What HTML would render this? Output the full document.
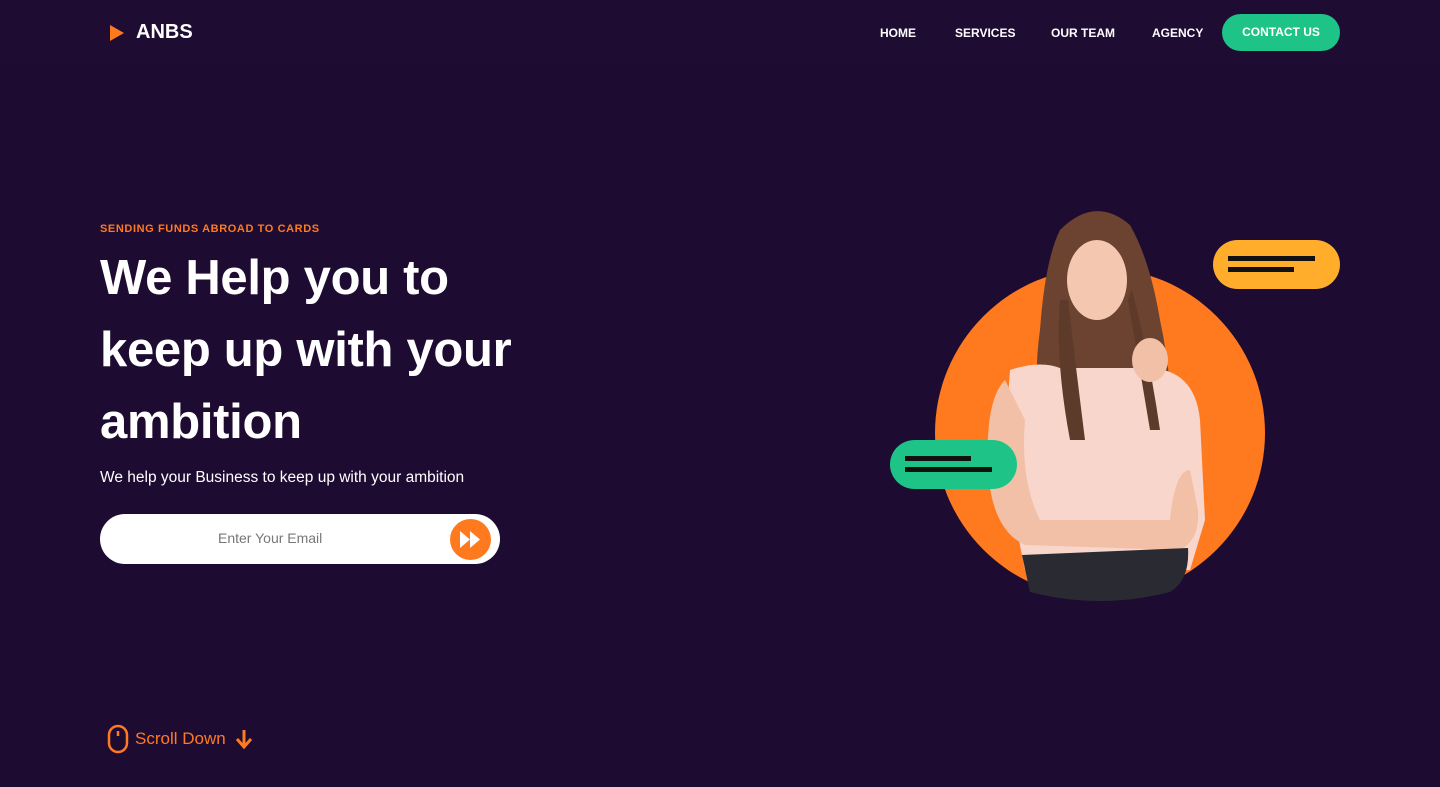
<!DOCTYPE html>
<html><head><meta charset="utf-8"><style>
*{margin:0;padding:0;box-sizing:border-box}
body{width:1440px;height:787px;background:#1e0b32;font-family:"Liberation Sans",sans-serif;position:relative;overflow:hidden;color:#fff}
.hdr{position:absolute;left:0;top:0;width:1440px;height:65px;background:#1f0c33}
.logo{position:absolute;left:110px;top:21px;font-weight:bold;font-size:20px;display:flex;align-items:center}
.logo i{width:0;height:0;border-left:14px solid #ff7a1f;border-top:8px solid transparent;border-bottom:8px solid transparent;margin-right:12px}
.nav a{position:absolute;top:26px;font-size:12px;font-weight:bold;color:#fff;text-decoration:none}
.cta{position:absolute;left:1222px;top:14px;width:118px;height:37px;border-radius:19px;background:#1ec387;font-size:12px;font-weight:bold;text-align:center;line-height:37px}
.sub{position:absolute;left:100px;top:223px;font-size:11px;font-weight:bold;color:#ff7a1f;letter-spacing:.6px}
h1{position:absolute;left:100px;top:242px;font-size:49px;line-height:72px;font-weight:bold;letter-spacing:-.3px;width:450px}
.p{position:absolute;left:100px;top:469px;font-size:15.5px}
.em{position:absolute;left:100px;top:514px;width:400px;height:50px;border-radius:25px;background:#fff}
.em span{position:absolute;left:118px;top:16px;font-size:14px;color:#777}
.em b{position:absolute;left:350px;top:5px;width:41px;height:41px;border-radius:50%;background:#ff7a1f}
.sd{position:absolute;left:107px;top:724px;color:#ff7a1f;font-size:17px;display:flex;align-items:center}
</style></head><body>
<div class="hdr"></div>
<div class="logo"><i></i>ANBS</div>
<div class="nav"><a style="left:880px">HOME</a><a style="left:955px">SERVICES</a><a style="left:1051px">OUR TEAM</a><a style="left:1152px">AGENCY</a></div>
<div class="cta">CONTACT US</div>
<div class="sub">SENDING FUNDS ABROAD TO CARDS</div>
<h1>We Help you to keep up with your ambition</h1>
<div class="p">We help your Business to keep up with your ambition</div>
<div class="em"><span>Enter Your Email</span><b><svg width="41" height="41" viewBox="0 0 41 41"><path d="M10 12 L20 20.5 L10 29Z M20 12 L30 20.5 L20 29Z" fill="#fff"/></svg></b></div>
<div class="sd"><svg width="22" height="30" viewBox="0 0 22 30" style="margin-right:6px"><rect x="2" y="2" width="18" height="26" rx="9" fill="none" stroke="#ff7a1f" stroke-width="2.5"/><line x1="11" y1="7" x2="11" y2="12" stroke="#ff7a1f" stroke-width="2.5"/></svg>Scroll Down<svg width="20" height="22" viewBox="0 0 20 22" style="margin-left:8px"><path d="M10 2 V18 M3 11 L10 19 L17 11" fill="none" stroke="#ff7a1f" stroke-width="3"/></svg></div>

<svg style="position:absolute;left:880px;top:190px" width="470" height="420" viewBox="880 190 470 420">
<circle cx="1100" cy="433" r="165" fill="#ff7a1f"/>
<path d="M1060 230 Q1095 195 1130 225 Q1150 260 1160 320 Q1175 390 1170 450 L1115 470 L1050 470 Q1030 400 1040 330 Q1045 260 1060 230Z" fill="#6b4330"/>
<path d="M1010 370 Q1040 360 1060 368 L1150 368 Q1195 370 1200 420 L1205 520 L1190 570 L1025 570 Q1010 500 1005 440 Z" fill="#f8d6cc"/>
<path d="M1005 380 Q985 400 988 470 Q992 530 1025 545 L1180 550 Q1200 540 1198 510 L1190 470 Q1175 470 1170 520 L1040 520 Q1020 480 1025 420Z" fill="#f2c0a6"/>
<ellipse cx="1097" cy="280" rx="30" ry="40" fill="#f4c8b0"/>
<path d="M1065 250 Q1095 205 1128 245 L1125 230 Q1095 200 1068 230Z" fill="#6b4330"/>
<path d="M1060 300 Q1055 360 1070 440 L1085 440 Q1075 360 1068 300Z M1128 300 Q1140 370 1150 430 L1160 430 Q1150 360 1132 290Z" fill="#5d3a2a"/>
<ellipse cx="1150" cy="360" rx="18" ry="22" fill="#f2c0a6"/>
<path d="M1022 555 L1188 548 Q1190 580 1170 592 Q1100 610 1030 592Z" fill="#2a2a33"/>
<rect x="1213" y="240" width="127" height="49" rx="24.5" fill="#ffad2a"/>
<rect x="1228" y="256" width="87" height="5" fill="#111"/><rect x="1228" y="267" width="66" height="5" fill="#111"/>
<rect x="890" y="440" width="127" height="49" rx="24.5" fill="#1ec387"/>
<rect x="905" y="456" width="66" height="5" fill="#111"/><rect x="905" y="467" width="87" height="5" fill="#111"/>
</svg>
</body></html>
